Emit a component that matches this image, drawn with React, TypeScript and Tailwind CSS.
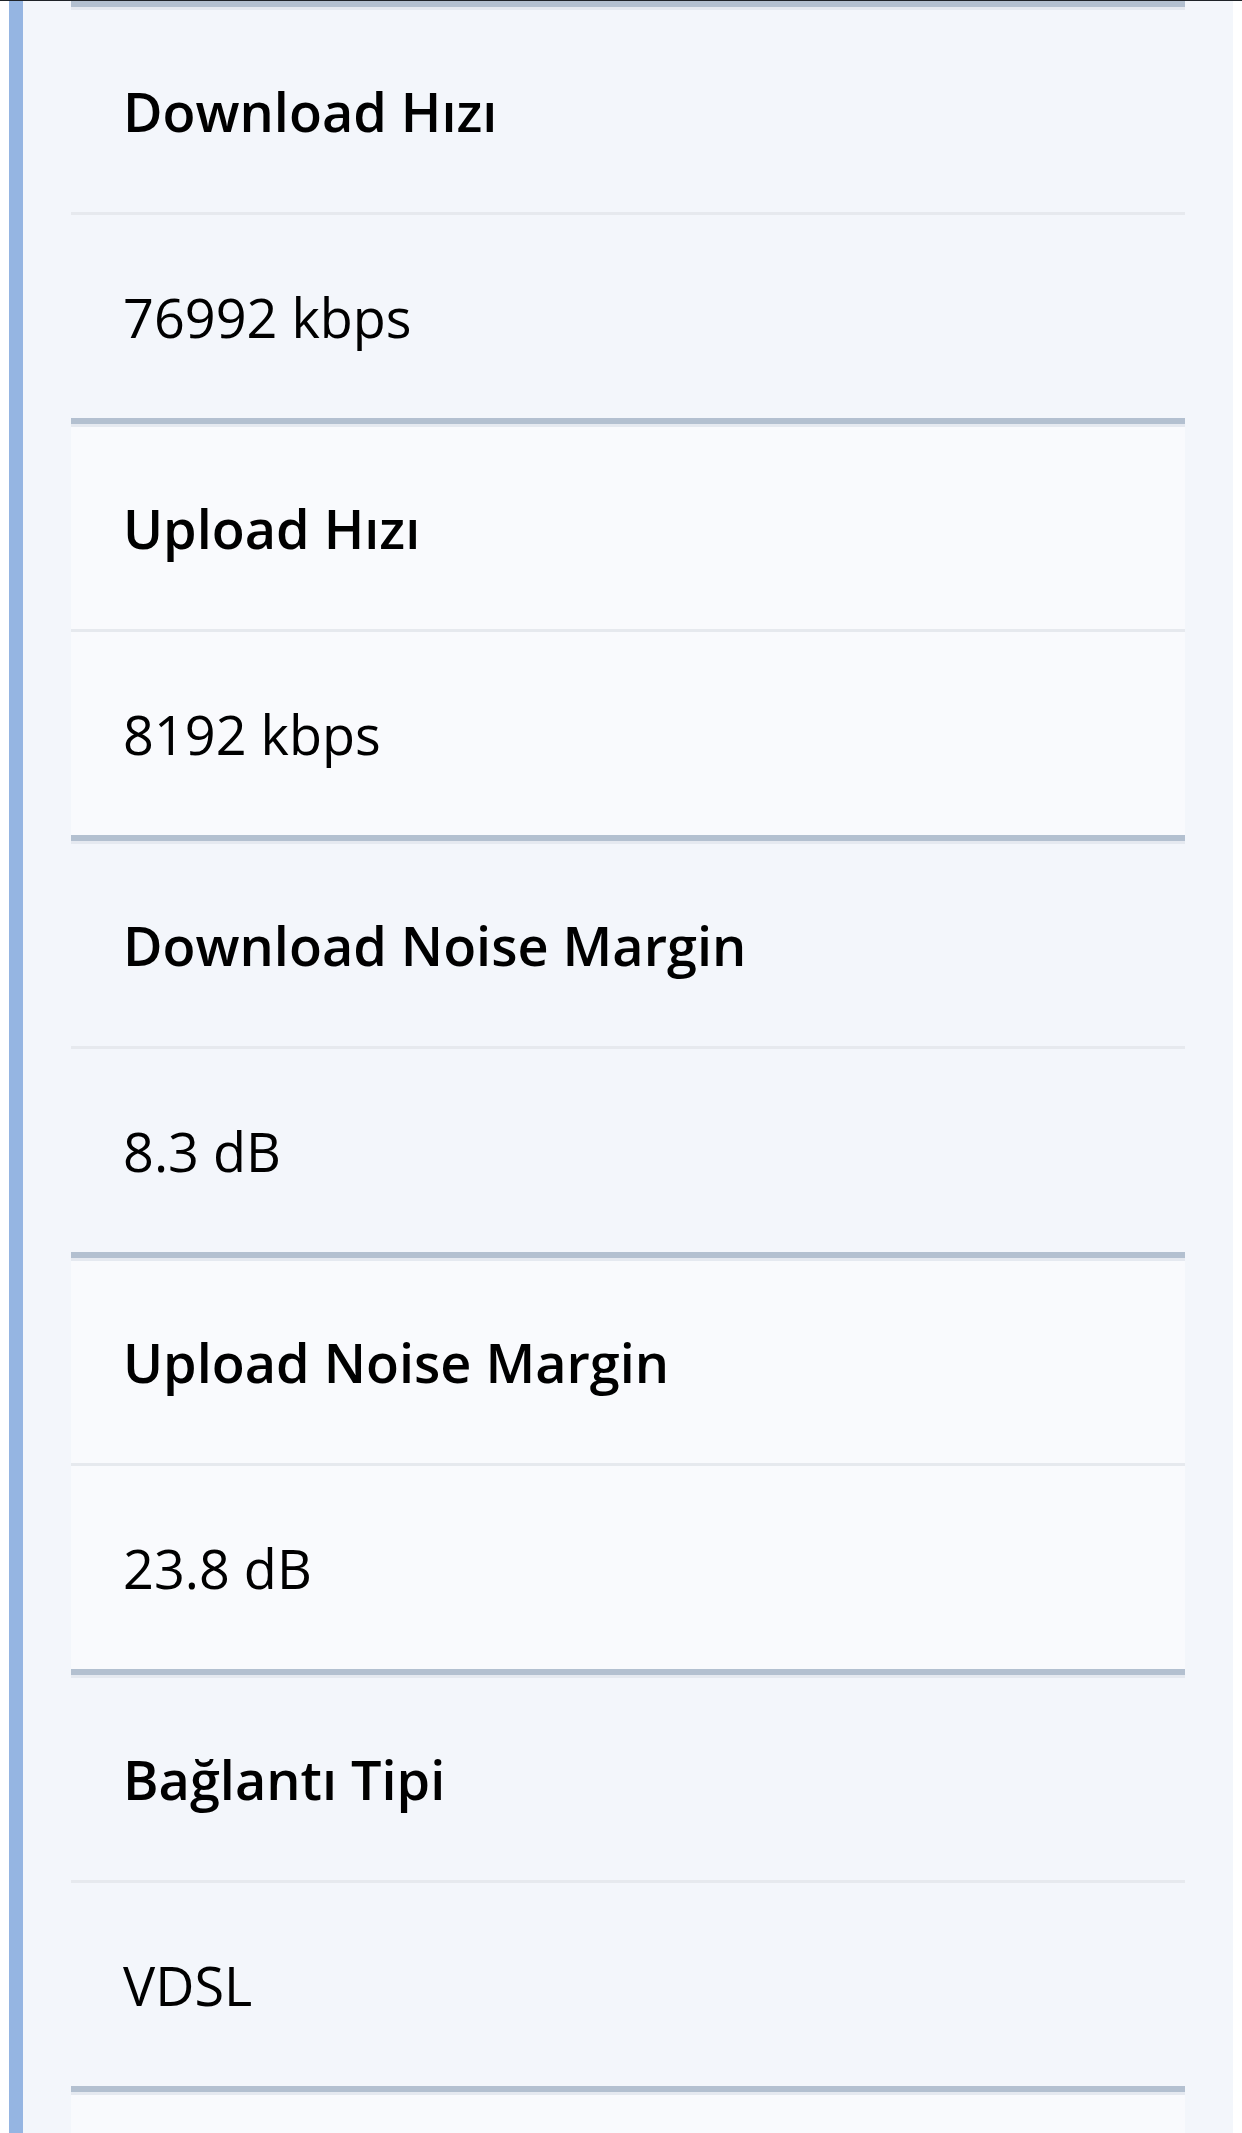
import React from "react";

const rows = [
  { label: "Download Hızı", value: "76992 kbps" },
  { label: "Upload Hızı", value: "8192 kbps" },
  { label: "Download Noise Margin", value: "8.3 dB" },
  { label: "Upload Noise Margin", value: "23.8 dB" },
  { label: "Bağlantı Tipi", value: "VDSL" },
  { label: "", value: "" },
];

export default function App() {
  return (
    <div
      className="w-[1242px] h-[2133px] overflow-hidden bg-white flex flex-col"
      style={{ fontFamily: '"Open Sans", "Noto Sans", sans-serif' }}
    >
      <div className="h-px w-full bg-[#1f2328] shrink-0" />
      <div className="flex-1 ml-[9px] mr-[9px] border-l-[14px] border-[#95b5e2] bg-[#f3f6fb] pl-[48px] pr-[48px]">
        {rows.map((r, i) => {
          const bg = i % 2 === 0 ? "bg-[#f3f6fb]" : "bg-[#f9fafd]";
          return (
            <div key={i} className={bg}>
              <div className="h-[6px] bg-[#b3c0d0]" />
              <div className="h-[3px] bg-[#e5e9f0]" />
              <div className="h-[202px] flex items-center pl-[52px] text-[54px] leading-[82px] font-semibold text-black">
                {r.label}
              </div>
              <div className="h-[3px] bg-[#e6e9ee]" />
              <div className="h-[203px] flex items-center pl-[52px] text-[54px] leading-[82px] text-black">
                {r.value}
              </div>
            </div>
          );
        })}
      </div>
    </div>
  );
}
